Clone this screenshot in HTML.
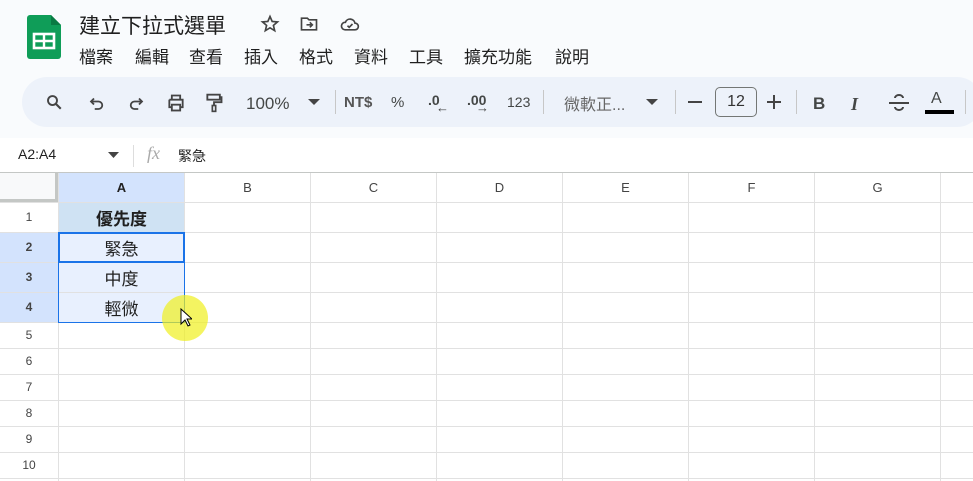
<!DOCTYPE html>
<html><head><meta charset="utf-8"><style>
*{box-sizing:border-box;margin:0;padding:0}
body{width:973px;height:481px;overflow:hidden;background:#f9fbfd;font-family:"Liberation Sans","Noto Sans CJK TC",sans-serif;color:#1f1f1f;position:relative}
.a{position:absolute}
.menu span{position:absolute;top:43px;font-size:17px;color:#1f1f1f}
.tb{left:22px;top:77px;width:960px;height:50px;background:#edf2fa;border-radius:25px}
.t{position:absolute;top:94px;font-size:16px;color:#444746}
.sep{position:absolute;top:90px;width:1px;height:24px;background:#c7c7c7}
.grid{left:0;top:172px;width:973px;height:309px;background:#fff}
.vl{position:absolute;top:173px;width:1px;height:308px;background:#e1e1e1}
.hl{position:absolute;left:0;width:973px;height:1px;background:#e1e1e1}
.ch{position:absolute;top:173px;height:29px;font-size:13px;color:#444;text-align:center;line-height:29px}
.rh{position:absolute;left:0;width:58px;font-size:12px;color:#444;text-align:center}
.cell{position:absolute;left:59px;width:125px;font-size:17px;text-align:center}
</style></head><body>
<svg class="a" style="left:27px;top:15px" width="34" height="44" viewBox="0 0 34 44"><path d="M3 0h21l10 10v31a3 3 0 0 1-3 3H3a3 3 0 0 1-3-3V3a3 3 0 0 1 3-3z" fill="#0f9d58"/><path d="M24 0v10h10z" fill="#0a7a43"/><rect x="7" y="19" width="20" height="14" fill="none" stroke="#fff" stroke-width="2.6"/><path d="M7 26h20M17 19v14" stroke="#fff" stroke-width="2.4"/></svg>
<div class="a" style="left:79px;top:10px;font-size:21px;color:#1f1f1f">建立下拉式選單</div>
<svg class="a" style="left:259px;top:14px" width="22" height="20" viewBox="0 0 24 24"><path d="M12 3l2.6 6 6.4.5-4.9 4.2 1.5 6.3L12 16.6 6.4 20l1.5-6.3L3 9.5 9.4 9z" fill="none" stroke="#444" stroke-width="2"/></svg>
<svg class="a" style="left:298px;top:14px" width="22" height="20" viewBox="0 0 24 24"><path d="M3 5h7l2 2h9v12H3z" fill="none" stroke="#444" stroke-width="2"/><path d="M9 13h7M13 10l3 3-3 3" fill="none" stroke="#444" stroke-width="2"/></svg>
<svg class="a" style="left:338px;top:14px" width="24" height="20" viewBox="0 0 24 24"><path d="M6 19h12a4 4 0 0 0 0-8 6 6 0 0 0-11.5-1A4.5 4.5 0 0 0 6 19z" fill="none" stroke="#444" stroke-width="2"/><path d="M9 14l2 2 4-4" fill="none" stroke="#444" stroke-width="2"/></svg>
<div class="menu"><span style="left:79px">檔案</span><span style="left:135px">編輯</span><span style="left:189px">查看</span><span style="left:244px">插入</span><span style="left:299px">格式</span><span style="left:354px">資料</span><span style="left:409px">工具</span><span style="left:464px">擴充功能</span><span style="left:555px">說明</span></div>
<div class="a tb"></div>
<svg class="a" style="left:45px;top:93px" width="18" height="18" viewBox="0 0 24 24"><circle cx="10" cy="10" r="6" fill="none" stroke="#444" stroke-width="2.5"/><path d="M14.5 14.5L21 21" stroke="#444" stroke-width="2.8"/></svg>
<svg class="a" style="left:88px;top:94px" width="18" height="18" viewBox="0 0 24 24"><path d="M8 6L4 10l4 4M4 10h10a5 5 0 0 1 0 10H9" fill="none" stroke="#444" stroke-width="2.4"/></svg>
<svg class="a" style="left:127px;top:94px" width="18" height="18" viewBox="0 0 24 24"><path d="M16 6l4 4-4 4M20 10H10a5 5 0 0 0 0 10h5" fill="none" stroke="#444" stroke-width="2.4"/></svg>
<svg class="a" style="left:165px;top:93px" width="22" height="20" viewBox="0 0 24 24"><path d="M7 8V3h10v5M4 8h16v9h-3M7 17H4V8" fill="none" stroke="#444" stroke-width="2.2"/><rect x="7" y="14" width="10" height="7" fill="none" stroke="#444" stroke-width="2.2"/></svg>
<svg class="a" style="left:204px;top:92px" width="20" height="22" viewBox="0 0 24 24"><rect x="4" y="2" width="15" height="6" fill="none" stroke="#444" stroke-width="2.2"/><path d="M19 5h2v6h-9v4" fill="none" stroke="#444" stroke-width="2.2"/><rect x="10" y="15" width="4" height="7" fill="none" stroke="#444" stroke-width="2"/></svg>
<div class="t" style="left:246px;font-size:17px">100%</div>
<svg class="a" style="left:308px;top:99px" width="12" height="7"><path d="M0 0h12L6 6z" fill="#444"/></svg>
<div class="sep" style="left:335px"></div>
<div class="t" style="left:344px;font-size:15px;font-weight:bold;color:#555">NT$</div>
<div class="t" style="left:391px;font-size:15px">%</div>
<div class="t" style="left:428px;top:92px;font-size:14px;font-weight:bold">.0</div><div class="a" style="left:436px;top:100px;font-size:13px;color:#444;font-weight:bold">←</div>
<div class="t" style="left:467px;top:92px;font-size:14px;font-weight:bold">.00</div><div class="a" style="left:476px;top:100px;font-size:13px;color:#444;font-weight:bold">→</div>
<div class="t" style="left:507px;font-size:14px">123</div>
<div class="sep" style="left:543px"></div>
<div class="t" style="left:564px;top:91px;color:#666">微軟正...</div>
<svg class="a" style="left:646px;top:99px" width="12" height="7"><path d="M0 0h12L6 6z" fill="#444"/></svg>
<div class="sep" style="left:675px"></div>
<div class="a" style="left:688px;top:101px;width:14px;height:2px;background:#444"></div>
<div class="a" style="left:715px;top:87px;width:42px;height:30px;border:1px solid #747775;border-radius:5px;text-align:center;line-height:28px;font-size:16px;color:#333">12</div>
<div class="a" style="left:767px;top:101px;width:14px;height:2px;background:#444"></div><div class="a" style="left:773px;top:95px;width:2px;height:14px;background:#444"></div>
<div class="sep" style="left:796px"></div>
<div class="t" style="left:813px;font-size:17px;font-weight:bold">B</div>
<div class="t" style="left:851px;font-size:18px;font-style:italic;font-family:'Liberation Serif',serif;font-weight:bold">I</div>
<svg class="a" style="left:888px;top:93px" width="22" height="20" viewBox="0 0 22 20"><path d="M1 10h20" stroke="#444" stroke-width="2"/><path d="M15 5a4 3 0 0 0-8 0M7 14a4 3 0 0 0 8 0" fill="none" stroke="#444" stroke-width="2"/></svg>
<div class="t" style="left:931px;top:90px;font-size:16px">A</div>
<div class="a" style="left:925px;top:110px;width:29px;height:4px;background:#000"></div>
<div class="sep" style="left:965px"></div>
<div class="a" style="left:0;top:138px;width:973px;height:35px;background:#fff"></div>
<div class="a" style="left:18px;top:146px;font-size:14px">A2:A4</div>
<svg class="a" style="left:108px;top:152px" width="11" height="6"><path d="M0 0h11L5.5 6z" fill="#444"/></svg>
<div class="a" style="left:133px;top:145px;width:1px;height:22px;background:#ddd"></div>
<div class="a" style="left:147px;top:143px;font-size:18px;font-style:italic;color:#aaa;font-family:'Liberation Serif',serif">fx</div>
<div class="a" style="left:178px;top:146px;font-size:14px">緊急</div>
<div class="a grid"></div>
<div class="a" style="left:0;top:173px;width:58px;height:29px;background:#f8f9fa"></div>
<div class="a" style="left:55px;top:173px;width:4px;height:29px;background:#c4c7c5"></div>
<div class="a" style="left:0;top:199px;width:58px;height:4px;background:#c4c7c5"></div>
<div class="a" style="left:59px;top:173px;width:125px;height:29px;background:#d3e3fd"></div>
<div class="a" style="left:0;top:232px;width:58px;height:90px;background:#d3e3fd"></div>
<div class="a" style="left:59px;top:202px;width:125px;height:30px;background:#cfe2f3"></div>
<div class="a" style="left:59px;top:232px;width:125px;height:90px;background:#e8f0fe"></div>
<div class="vl" style="left:58px"></div><div class="vl" style="left:184px"></div><div class="vl" style="left:310px"></div><div class="vl" style="left:436px"></div><div class="vl" style="left:562px"></div><div class="vl" style="left:688px"></div><div class="vl" style="left:814px"></div><div class="vl" style="left:940px"></div>
<div class="hl" style="top:172px;background:#c4c7c5"></div>
<div class="hl" style="top:202px"></div><div class="hl" style="top:232px"></div><div class="hl" style="top:262px"></div><div class="hl" style="top:292px"></div><div class="hl" style="top:322px"></div><div class="hl" style="top:348px"></div><div class="hl" style="top:374px"></div><div class="hl" style="top:400px"></div><div class="hl" style="top:426px"></div><div class="hl" style="top:452px"></div><div class="hl" style="top:478px"></div>
<div class="ch" style="left:59px;width:125px;font-weight:bold;color:#222">A</div>
<div class="ch" style="left:185px;width:125px">B</div><div class="ch" style="left:311px;width:125px">C</div><div class="ch" style="left:437px;width:125px">D</div><div class="ch" style="left:563px;width:125px">E</div><div class="ch" style="left:689px;width:125px">F</div><div class="ch" style="left:815px;width:125px">G</div>
<div class="rh" style="top:210px">1</div><div class="rh" style="top:240px;font-weight:bold">2</div><div class="rh" style="top:270px;font-weight:bold">3</div><div class="rh" style="top:300px;font-weight:bold">4</div><div class="rh" style="top:328px">5</div><div class="rh" style="top:354px">6</div><div class="rh" style="top:380px">7</div><div class="rh" style="top:406px">8</div><div class="rh" style="top:432px">9</div><div class="rh" style="top:458px">10</div>
<div class="cell" style="top:205px;font-weight:bold">優先度</div>
<div class="cell" style="top:235px">緊急</div><div class="cell" style="top:265px">中度</div><div class="cell" style="top:295px">輕微</div>
<div class="a" style="left:58px;top:232px;width:127px;height:91px;border:1px solid #1a73e8"></div>
<div class="a" style="left:58px;top:232px;width:127px;height:31px;border:2px solid #1a73e8"></div>
<div class="a" style="left:162px;top:295px;width:46px;height:46px;border-radius:50%;background:rgba(240,240,30,.7)"></div>
<svg class="a" style="left:180px;top:308px" width="12" height="20" viewBox="0 0 12 20"><path d="M1 1v15l4-4 3 6 2-1-3-6h5z" fill="#fff" stroke="#000" stroke-width="1"/></svg>
</body></html>
